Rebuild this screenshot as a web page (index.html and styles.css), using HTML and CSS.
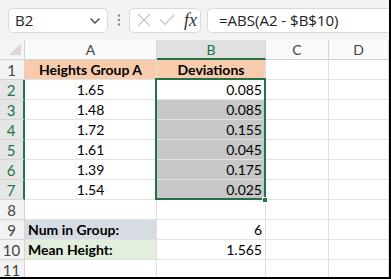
FILE: index.html
```html
<!DOCTYPE html>
<html lang="en">
<head>
  <meta charset="UTF-8">
  <title>Heights Group A</title>
  <link rel="stylesheet" href="styles.css">
</head>
<body>
  <div class="app">

    <div class="toolbar">
      <div class="namebox">
        <span>B2</span>
        <svg class="chev" width="12" height="8" viewBox="0 0 12 8"><path d="M1.5 1.5 L6 6 L10.5 1.5" fill="none" stroke="#444" stroke-width="1.3"/></svg>
      </div>
      <svg class="dots" width="4" height="12" viewBox="0 0 4 12"><circle cx="2" cy="1.5" r="1.2" fill="#8a8a8a"/><circle cx="2" cy="6" r="1.2" fill="#8a8a8a"/><circle cx="2" cy="10.5" r="1.2" fill="#8a8a8a"/></svg>
      <div class="fxbox">
        <svg width="14" height="14" viewBox="0 0 14 14"><path d="M1 1 L13 13 M13 1 L1 13" stroke="#c4c4c4" stroke-width="1.2"/></svg>
        <svg width="16" height="12" viewBox="0 0 16 12"><path d="M1 5.5 L6 10.5 L15 1" fill="none" stroke="#c4c4c4" stroke-width="1.2"/></svg>
        <span class="fx">fx</span>
      </div>
      <div class="formula">=ABS(A2 - $B$10)</div>
    </div>

    <div class="sheet">
      <!-- header row -->
      <div class="corner"><svg width="14" height="14" viewBox="0 0 14 14"><path d="M13 1 L13 13 L1 13 Z" fill="#d9d9d9"/></svg></div>
      <div class="colh">A</div>
      <div class="colh sel">B</div>
      <div class="colh">C</div>
      <div class="colh">D</div>

      <div class="rowh">1</div>
      <div class="c peach bold center">Heights Group A</div>
      <div class="c peach bold center">Deviations</div>
      <div class="c"></div><div class="c"></div>

      <div class="rowh sel">2</div>
      <div class="c center">1.65</div>
      <div class="c right">0.085</div>
      <div class="c"></div><div class="c"></div>

      <div class="rowh sel">3</div>
      <div class="c center">1.48</div>
      <div class="c right shade">0.085</div>
      <div class="c"></div><div class="c"></div>

      <div class="rowh sel">4</div>
      <div class="c center">1.72</div>
      <div class="c right shade">0.155</div>
      <div class="c"></div><div class="c"></div>

      <div class="rowh sel">5</div>
      <div class="c center">1.61</div>
      <div class="c right shade">0.045</div>
      <div class="c"></div><div class="c"></div>

      <div class="rowh sel">6</div>
      <div class="c center">1.39</div>
      <div class="c right shade">0.175</div>
      <div class="c"></div><div class="c"></div>

      <div class="rowh sel">7</div>
      <div class="c center">1.54</div>
      <div class="c right shade">0.025</div>
      <div class="c"></div><div class="c"></div>

      <div class="rowh">8</div>
      <div class="c"></div><div class="c"></div><div class="c"></div><div class="c"></div>

      <div class="rowh">9</div>
      <div class="c slate bold">Num in Group:</div>
      <div class="c right">6</div>
      <div class="c"></div><div class="c"></div>

      <div class="rowh">10</div>
      <div class="c mint bold">Mean Height:</div>
      <div class="c right">1.565</div>
      <div class="c"></div><div class="c"></div>

      <div class="rowh">11</div>
      <div class="c"></div><div class="c"></div><div class="c"></div><div class="c"></div>

      <!-- selection B2:B7 -->
      <div class="selbox"></div>
      <div class="handle"></div>
    </div>

  </div>
</body>
</html>
```

FILE: styles.css
```css
html, body { margin: 0; padding: 0; background: #fff; }
body { font-family: Lato, "Liberation Sans", sans-serif; }

.app {
  width: 389px; height: 277px; overflow: hidden;
  border-right: 2px solid #000; border-bottom: 2px solid #000;
  background: #fff;
}

.toolbar {
  height: 40px; background: #f3f3f3;
  display: flex; align-items: center; gap: 0;
  padding-left: 8px; box-sizing: border-box;
}
.namebox {
  width: 100px; height: 25px; box-sizing: border-box;
  background: #fff; border: 1px solid #dadada; border-radius: 5px;
  display: flex; align-items: center; justify-content: space-between;
  padding: 0 6px 0 6px; font-family: "Open Sans", sans-serif; font-size: 15px; color: #222;
}
.chev { margin-top: 1px; }
.dots { margin: 0 8px 0 9px; }
.fxbox {
  width: 72px; height: 25px; box-sizing: border-box;
  background: #fff; border: 1px solid #dadada; border-radius: 5px;
  display: flex; align-items: center; gap: 8px; padding-left: 7px;
}
.fx { font-family: "Liberation Serif", serif; font-style: italic; font-size: 18px; color: #333; margin-left: 1px; }
.formula {
  flex: 1; height: 25px; box-sizing: border-box; margin-left: 6px;
  background: #fff; border: 1px solid #dadada; border-right: none; border-radius: 5px 0 0 5px;
  display: flex; align-items: center; padding-left: 11px;
  font-family: "Open Sans", sans-serif; font-size: 15px; color: #222;
}

.sheet {
  position: relative;
  display: grid;
  grid-template-columns: 25px 132px 109px 63px 1fr;
  grid-auto-rows: 20px;
  font-size: 14px; color: #000;
}
.sheet > div { box-sizing: border-box; }

.corner, .colh, .rowh {
  background: #f5f5f5; color: #444;
  border-right: 1px solid #d4d4d4; border-bottom: 1px solid #d4d4d4;
}
.corner { display: flex; align-items: flex-end; justify-content: flex-end; padding: 0 2px 3px 0; }
.colh { display: flex; align-items: center; justify-content: center; background: #fafafa; }
.colh.sel { background: #e0e0e0; color: #217346; border-bottom: 2px solid #217346; }
.rowh { display: flex; align-items: center; justify-content: center; background: #f3f3f3; padding-right: 1px; font-size: 15px; }
.rowh.sel { background: #e6e6e6; color: #217346; border-right: 2px solid #217346; }

.c {
  border-right: 1px solid #e1e1e1; border-bottom: 1px solid #e1e1e1;
  display: flex; align-items: center; padding: 0 3px; white-space: nowrap;
}
.center { justify-content: center; }
.right { justify-content: flex-end; }
.bold { font-weight: 700; }
.peach { background: #f8cbad; }
.slate { background: #d6dce4; }
.mint { background: #e2efda; }
.shade { background: #c8c8c8; }

.selbox {
  position: absolute; left: 155px; top: 38px; width: 111px; height: 122px;
  border: 2px solid #217346; box-sizing: border-box; pointer-events: none;
}
.handle {
  position: absolute; left: 262px; top: 157px; width: 6px; height: 6px;
  background: #217346; border: 1px solid #fff; box-sizing: border-box;
}
```
